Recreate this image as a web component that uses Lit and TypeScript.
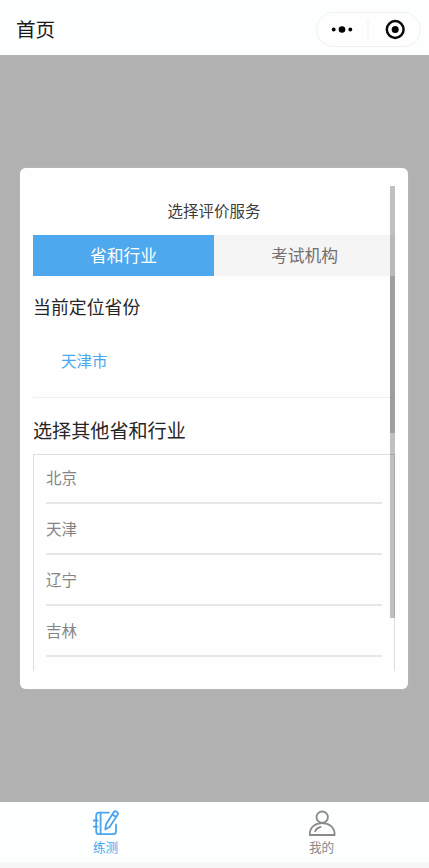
import { LitElement, html, css, svg } from "lit";
import { customElement, property, state } from "lit/decorators.js";
import { classMap } from "lit/directives/class-map.js";

const font = css`"Noto Sans CJK SC", "Noto Sans", sans-serif`;

@customElement("capsule-menu")
class CapsuleMenu extends LitElement {
  static styles = css`
    :host { display: block; width: 105px; height: 35px; }
    svg { display: block; }
  `;
  render() {
    return html`<svg width="105" height="35" viewBox="0 0 105 35">
      <rect x=".5" y=".5" width="104" height="34" rx="17" fill="#fefefe" stroke="#f0f1f1" />
      <path d="M52 7V28" stroke="#f0f0f0" />
      <circle cx="17.7" cy="17.5" r="1.9" />
      <circle cx="26" cy="17.5" r="3.3" />
      <circle cx="34.3" cy="17.5" r="1.9" />
      <circle cx="79.2" cy="17.5" r="8.4" fill="none" stroke="#0a0a0a" stroke-width="2.5" />
      <circle cx="79.2" cy="17.5" r="3.5" />
    </svg>`;
  }
}

@customElement("tab-item")
class TabItem extends LitElement {
  @property() icon = "";
  @property() label = "";
  @property({ type: Boolean, reflect: true }) active = false;
  static styles = css`
    :host {
      width: 216px; flex: none; display: flex; flex-direction: column; align-items: center;
      padding-top: 7px; color: #8a8a8a; font: 12.6px/18px ${font};
    }
    :host([active]) { color: #4aa5ee; }
    svg { display: block; margin-bottom: 1px; }
  `;
  render() {
    const art = this.icon === "book"
      ? svg`<path d="M16.8 3.6H6.8Q4.2 3.6 4.2 6.2V22.6Q4.2 25.2 6.8 25.2H21.4Q24 25.2 24 22.6V15.5M8.6 3.8V25M1.8 11.5H5.6M1.8 17.6H5.6" />
            <path d="M21.7 3.2L14 15.3L13.3 20.4L17.6 18L25.8 5.6Q26.5 4.3 25.3 3.2L24.5 2.7Q22.8 1.7 21.7 3.2ZM20.3 5.5L24.2 8" />`
      : svg`<circle cx="14.2" cy="8.2" r="5.7" />
            <path d="M1.8 26V24.8C1.8 18.6 7 14.1 14.2 14.1S26.6 18.6 26.6 24.8V26Z" />
            <path d="M7.2 22.3C8 20.2 10 18.6 12.6 17.9" />`;
    return html`<svg width="28" height="28" viewBox="0 0 28 28" fill="none" stroke="currentColor"
        stroke-width="1.8" stroke-linecap="round" stroke-linejoin="round">${art}</svg>
      <span>${this.label}</span>`;
  }
}

@customElement("app-root")
class AppRoot extends LitElement {
  @state() private selected = 0;
  private tabs = ["省和行业", "考试机构"];
  private provinces = ["北京", "天津", "辽宁", "吉林"];

  static styles = css`
    :host {
      display: flex; flex-direction: column; height: 868px; overflow: hidden;
      font-family: ${font}; background: #f7f7f7; color: #262626;
    }
    * { box-sizing: border-box; }
    header {
      height: 55px; flex: none; display: flex; align-items: center;
      justify-content: space-between; padding: 4px 8px 0 16px; background: #fdfefe;
      font-size: 19.6px; color: #1a1a1a;
    }
    header span { padding-bottom: 2px; }
    main {
      height: 747px; flex: none; background: #b1b1b1;
      padding: 113px 21px 113px 20px; display: flex;
    }
    .dialog {
      flex: 1; background: #fefefe; border-radius: 6px; padding: 18px 13px;
      box-shadow: 0 0 1px #dedede;
    }
    .scroller { height: 485px; position: relative; overflow: hidden; }
    .title { height: 49px; text-align: center; font-size: 15.5px; line-height: 49px; color: #3c3c3c; }
    .tabs { display: flex; height: 41px; }
    .tab {
      flex: 1; text-align: center; font-size: 16.8px; line-height: 41px;
      background: #f5f5f5; color: #707070;
    }
    .tab.on { background: #4da8ee; color: #fff; }
    .heading { font-size: 17.9px; line-height: 28px; padding-top: 16px; }
    .current {
      height: 78px; border-bottom: 1px solid #f0f0f0; padding-left: 28px;
      font-size: 15.5px; line-height: 81px; color: #4ba8f0;
    }
    .heading.big { font-size: 19.1px; padding-top: 18px; height: 56px; }
    .list { border: 1px solid #dedede; border-width: 1px 1px 0; height: 260px; padding: 0 12px; }
    .row {
      height: 51px; border-bottom: 2px solid #e7e7e7; font-size: 15.5px;
      line-height: 48px; color: #858585;
    }
    .row:first-child { height: 49px; line-height: 45px; }
    .bar { position: absolute; right: 0; width: 5px; background: rgba(0, 0, 0, 0.245); }
    .bar.outer { top: 0; height: 432px; }
    .bar.inner { top: 90px; height: 157px; background: rgba(0, 0, 0, 0.17); }
    footer { height: 60px; flex: none; display: flex; justify-content: center; background: #fdfefe; padding-right: 2px; }
  `;

  render() {
    return html`
      <header><span>首页</span><capsule-menu></capsule-menu></header>
      <main>
        <section class="dialog">
          <div class="scroller">
            <div class="title">选择评价服务</div>
            <div class="tabs">
              ${this.tabs.map((t, i) => html`<div class=${classMap({ tab: true, on: i === this.selected })}
                @click=${() => (this.selected = i)}>${t}</div>`)}
            </div>
            <div class="heading">当前定位省份</div>
            <div class="current">天津市</div>
            <div class="heading big">选择其他省和行业</div>
            <div class="list">${this.provinces.map((p) => html`<div class="row">${p}</div>`)}</div>
            <div class="bar outer"></div>
            <div class="bar inner"></div>
          </div>
        </section>
      </main>
      <footer>
        <tab-item icon="book" label="练测" active></tab-item>
        <tab-item icon="person" label="我的"></tab-item>
      </footer>
    `;
  }
}
